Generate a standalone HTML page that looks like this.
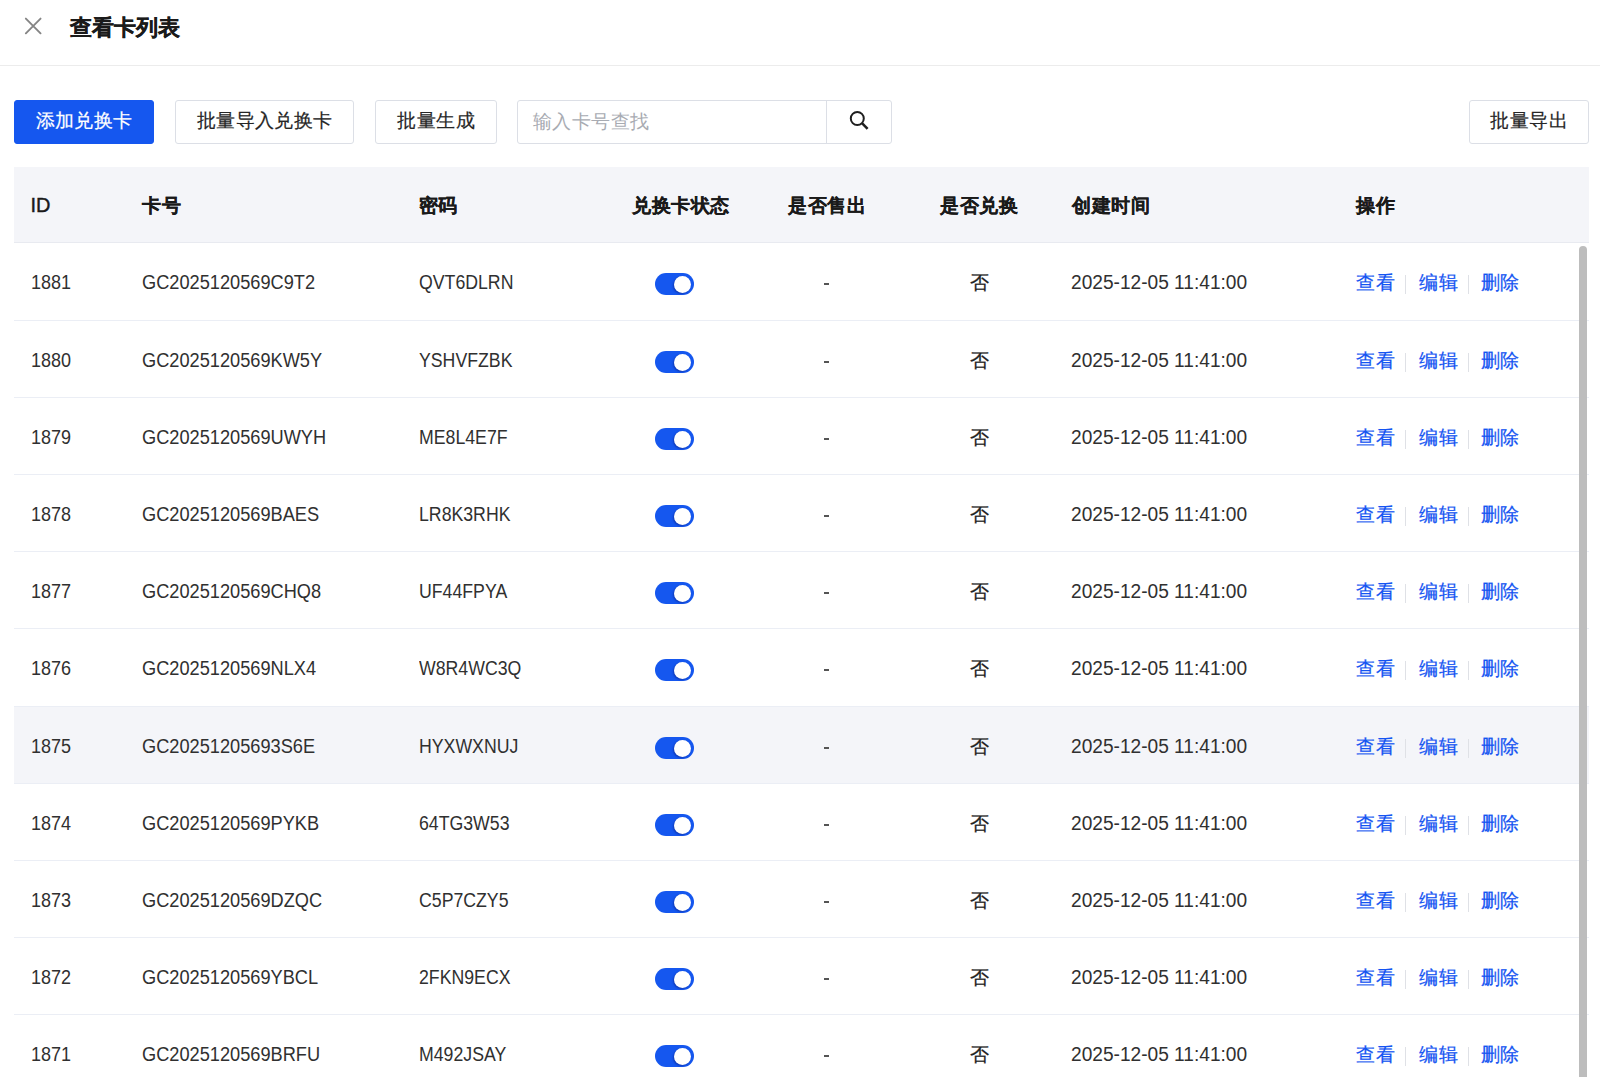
<!DOCTYPE html>
<html><head><meta charset="utf-8"><style>
*{margin:0;padding:0;box-sizing:border-box}
html,body{width:1600px;height:1077px;overflow:hidden;background:#fff}
body{position:relative;font-family:"Liberation Sans",sans-serif;color:#262626}
.hdr{position:absolute;left:0;top:0;width:1600px;height:66px;border-bottom:1px solid #ececec}
.close{position:absolute;left:24px;top:17px;width:18px;height:18px}
.title{position:absolute;left:70px;top:13.5px;font-size:22px;font-weight:bold;line-height:28px;color:#1a1a1a;-webkit-text-stroke:0.3px currentColor}
.btn{-webkit-text-stroke:0.2px currentColor;letter-spacing:0.45px;text-indent:0.45px;position:absolute;top:100px;height:44px;border:1px solid #dcdfe6;border-radius:3px;background:#fff;font-size:19.3px;line-height:40px;text-align:center;color:#262626}
.btn.pri{background:#1557ef;border-color:#1557ef;color:#fff}
.search{position:absolute;left:517px;top:100px;width:375px;height:44px;border:1px solid #dcdfe6;border-radius:3px}
.search .ph{letter-spacing:0.4px;position:absolute;left:15px;top:0;line-height:41px;font-size:19.4px;color:#a8abb2}
.search .sep{position:absolute;left:308px;top:0;width:1px;height:42px;background:#dcdfe6}
.search svg{position:absolute;left:330px;top:7px}
.thead{position:absolute;left:14px;top:167px;width:1575px;height:76px;background:#f4f5f9;border-bottom:1px solid #e8eaf0}
.th{position:absolute;top:0;line-height:77px;font-size:19.3px;font-weight:bold;color:#1a1a1a;-webkit-text-stroke:0.2px currentColor;letter-spacing:0.5px}
.th.idh{letter-spacing:0;font-size:20px;font-weight:normal;-webkit-text-stroke:0.4px currentColor}
.row{position:absolute;left:14px;width:1575px;border-bottom:1px solid #ebeef5;background:#fff}
.row.hov{background:#f4f5f9}
.l{position:absolute;top:28px;line-height:23px;font-size:20px;white-space:nowrap;transform-origin:0 0;color:#303030}
.z{position:absolute;top:0;line-height:79px;font-size:19.2px;white-space:nowrap;-webkit-text-stroke:0.25px currentColor;letter-spacing:0.6px}
.cid{left:16.8px;transform:scaleX(.9)}
.ccard{left:128px;transform:scaleX(.91)}
.cpw{left:404.5px;transform:scaleX(.885)}
.cdate{left:1056.7px;transform:scaleX(.956)}
.dash{position:absolute;left:809.5px;top:39.5px;width:5px;height:2px;background:#555}
.cr{left:955.5px;color:#222}
.a1{left:1342px;color:#1454f2}.a2{left:1405px;color:#1454f2}.a3{left:1466.5px;color:#1454f2}
.dv{position:absolute;top:32px;width:1px;height:19px;background:#dfe1e6}
.d1{left:1391px}.d2{left:1454px}
.sw{position:absolute;left:640.5px;top:30px;width:39.5px;height:22px;border-radius:11px;background:#1557ef}
.sw i{position:absolute;right:3px;top:2.5px;width:17px;height:17px;border-radius:50%;background:#fff;box-shadow:-1px 1px 2px rgba(0,0,80,.35)}
.sb{position:absolute;left:1579px;top:246px;width:8px;height:840px;border-radius:4px;background:#bdbdbd}
</style></head><body>
<div class="hdr">
<svg class="close" viewBox="0 0 18 18"><path d="M1.85 1.6L16.55 16.3M16.55 1.6L1.85 16.3" stroke="#858585" stroke-width="1.9" stroke-linecap="round" fill="none"/></svg>
<div class="title">查看卡列表</div>
</div>
<div class="btn pri" style="left:14px;width:140px">添加兑换卡</div>
<div class="btn" style="left:175px;width:179px">批量导入兑换卡</div>
<div class="btn" style="left:375px;width:122px">批量生成</div>
<div class="search"><span class="ph">输入卡号查找</span><span class="sep"></span>
<svg width="24" height="24" viewBox="0 0 24 24"><circle cx="9.3" cy="10.5" r="6.5" stroke="#1f1f1f" stroke-width="2" fill="none"/><path d="M14.0 15.2L19.6 20.8" stroke="#1f1f1f" stroke-width="2.6"/></svg>
</div>
<div class="btn" style="left:1469px;width:120px">批量导出</div>
<div class="thead">
<span class="th idh" style="left:16.5px">ID</span>
<span class="th" style="left:128px">卡号</span>
<span class="th" style="left:404.5px">密码</span>
<span class="th" style="left:618px">兑换卡状态</span>
<span class="th" style="left:774px">是否售出</span>
<span class="th" style="left:926px">是否兑换</span>
<span class="th" style="left:1058px">创建时间</span>
<span class="th" style="left:1342px">操作</span>
</div>
<div class="row" style="top:243px;height:78px">
<span class="l cid">1881</span><span class="l ccard">GC2025120569C9T2</span><span class="l cpw">QVT6DLRN</span>
<span class="sw"><i></i></span><b class="dash"></b><span class="z cr">否</span><span class="l cdate">2025-12-05 11:41:00</span>
<span class="z a1">查看</span><b class="dv d1"></b><span class="z a2">编辑</span><b class="dv d2"></b><span class="z a3">删除</span>
</div>
<div class="row" style="top:321px;height:77px">
<span class="l cid">1880</span><span class="l ccard">GC2025120569KW5Y</span><span class="l cpw">YSHVFZBK</span>
<span class="sw"><i></i></span><b class="dash"></b><span class="z cr">否</span><span class="l cdate">2025-12-05 11:41:00</span>
<span class="z a1">查看</span><b class="dv d1"></b><span class="z a2">编辑</span><b class="dv d2"></b><span class="z a3">删除</span>
</div>
<div class="row" style="top:398px;height:77px">
<span class="l cid">1879</span><span class="l ccard">GC2025120569UWYH</span><span class="l cpw">ME8L4E7F</span>
<span class="sw"><i></i></span><b class="dash"></b><span class="z cr">否</span><span class="l cdate">2025-12-05 11:41:00</span>
<span class="z a1">查看</span><b class="dv d1"></b><span class="z a2">编辑</span><b class="dv d2"></b><span class="z a3">删除</span>
</div>
<div class="row" style="top:475px;height:77px">
<span class="l cid">1878</span><span class="l ccard">GC2025120569BAES</span><span class="l cpw">LR8K3RHK</span>
<span class="sw"><i></i></span><b class="dash"></b><span class="z cr">否</span><span class="l cdate">2025-12-05 11:41:00</span>
<span class="z a1">查看</span><b class="dv d1"></b><span class="z a2">编辑</span><b class="dv d2"></b><span class="z a3">删除</span>
</div>
<div class="row" style="top:552px;height:77px">
<span class="l cid">1877</span><span class="l ccard">GC2025120569CHQ8</span><span class="l cpw">UF44FPYA</span>
<span class="sw"><i></i></span><b class="dash"></b><span class="z cr">否</span><span class="l cdate">2025-12-05 11:41:00</span>
<span class="z a1">查看</span><b class="dv d1"></b><span class="z a2">编辑</span><b class="dv d2"></b><span class="z a3">删除</span>
</div>
<div class="row" style="top:629px;height:78px">
<span class="l cid">1876</span><span class="l ccard">GC2025120569NLX4</span><span class="l cpw">W8R4WC3Q</span>
<span class="sw"><i></i></span><b class="dash"></b><span class="z cr">否</span><span class="l cdate">2025-12-05 11:41:00</span>
<span class="z a1">查看</span><b class="dv d1"></b><span class="z a2">编辑</span><b class="dv d2"></b><span class="z a3">删除</span>
</div>
<div class="row hov" style="top:707px;height:77px">
<span class="l cid">1875</span><span class="l ccard">GC20251205693S6E</span><span class="l cpw">HYXWXNUJ</span>
<span class="sw"><i></i></span><b class="dash"></b><span class="z cr">否</span><span class="l cdate">2025-12-05 11:41:00</span>
<span class="z a1">查看</span><b class="dv d1"></b><span class="z a2">编辑</span><b class="dv d2"></b><span class="z a3">删除</span>
</div>
<div class="row" style="top:784px;height:77px">
<span class="l cid">1874</span><span class="l ccard">GC2025120569PYKB</span><span class="l cpw">64TG3W53</span>
<span class="sw"><i></i></span><b class="dash"></b><span class="z cr">否</span><span class="l cdate">2025-12-05 11:41:00</span>
<span class="z a1">查看</span><b class="dv d1"></b><span class="z a2">编辑</span><b class="dv d2"></b><span class="z a3">删除</span>
</div>
<div class="row" style="top:861px;height:77px">
<span class="l cid">1873</span><span class="l ccard">GC2025120569DZQC</span><span class="l cpw">C5P7CZY5</span>
<span class="sw"><i></i></span><b class="dash"></b><span class="z cr">否</span><span class="l cdate">2025-12-05 11:41:00</span>
<span class="z a1">查看</span><b class="dv d1"></b><span class="z a2">编辑</span><b class="dv d2"></b><span class="z a3">删除</span>
</div>
<div class="row" style="top:938px;height:77px">
<span class="l cid">1872</span><span class="l ccard">GC2025120569YBCL</span><span class="l cpw">2FKN9ECX</span>
<span class="sw"><i></i></span><b class="dash"></b><span class="z cr">否</span><span class="l cdate">2025-12-05 11:41:00</span>
<span class="z a1">查看</span><b class="dv d1"></b><span class="z a2">编辑</span><b class="dv d2"></b><span class="z a3">删除</span>
</div>
<div class="row" style="top:1015px;height:77px">
<span class="l cid">1871</span><span class="l ccard">GC2025120569BRFU</span><span class="l cpw">M492JSAY</span>
<span class="sw"><i></i></span><b class="dash"></b><span class="z cr">否</span><span class="l cdate">2025-12-05 11:41:00</span>
<span class="z a1">查看</span><b class="dv d1"></b><span class="z a2">编辑</span><b class="dv d2"></b><span class="z a3">删除</span>
</div>
<div class="sb"></div>
</body></html>
